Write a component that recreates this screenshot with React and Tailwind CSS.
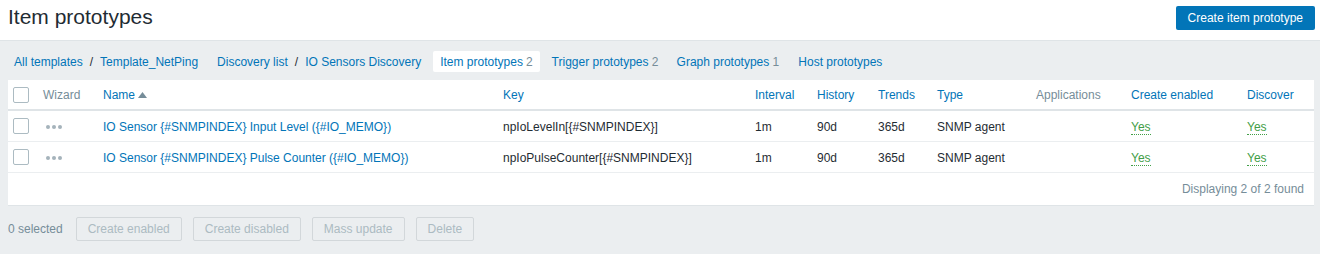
const cols = [
  { label: "", w: "w-[30px]" },
  { label: "Wizard", w: "w-[60px]", gray: true },
  { label: "Name", w: "w-[400px]", sort: true },
  { label: "Key", w: "w-[252px]" },
  { label: "Interval", w: "w-[62px]" },
  { label: "History", w: "w-[61px]" },
  { label: "Trends", w: "w-[59px]" },
  { label: "Type", w: "w-[99px]" },
  { label: "Applications", w: "w-[95px]", gray: true },
  { label: "Create enabled", w: "w-[116px]" },
  { label: "Discover", w: "w-[72px]" },
];

const rows = [
  {
    name: "IO Sensor {#SNMPINDEX} Input Level ({#IO_MEMO})",
    key: "npIoLevelIn[{#SNMPINDEX}]",
  },
  {
    name: "IO Sensor {#SNMPINDEX} Pulse Counter ({#IO_MEMO})",
    key: "npIoPulseCounter[{#SNMPINDEX}]",
  },
];

function Checkbox() {
  return (
    <span className="block h-[16px] w-[16px] rounded-[2px] border border-[#acbbc2] bg-white" />
  );
}

function Dots() {
  return (
    <span className="flex gap-[2px]">
      <span className="h-[4px] w-[4px] rounded-full bg-[#a5b3bb]" />
      <span className="h-[4px] w-[4px] rounded-full bg-[#a5b3bb]" />
      <span className="h-[4px] w-[4px] rounded-full bg-[#a5b3bb]" />
    </span>
  );
}

function Yes() {
  return (
    <span className="border-b border-dotted border-[#429e47] text-[#429e47]">Yes</span>
  );
}

export default function App() {
  return (
    <div
      className="min-h-[254px] bg-[#ebeef0] text-[12px] text-[#1f2c33]"
      style={{ fontFamily: '"Liberation Sans", Arial, sans-serif' }}
    >
      <div className="flex h-[41px] items-start justify-between border-b border-[#dfe4e7] bg-white px-[8px]">
        <h1 className="mt-[5px] text-[21px] leading-[24px] font-normal text-[#1f2c33]">
          Item prototypes
        </h1>
        <button className="mt-[6px] mr-[-3px] h-[24px] rounded-[2px] bg-[#0275b8] px-[12px] text-[12px] text-white">
          Create item prototype
        </button>
      </div>

      <div className="flex h-[39px] items-center px-[14px] pt-[2px] text-[#0275b8]">
        <span>All templates</span>
        <span className="mx-[7px] text-[#1f2c33]">/</span>
        <span>Template_NetPing</span>
        <span className="ml-[19px]">Discovery list</span>
        <span className="mx-[7px] text-[#1f2c33]">/</span>
        <span>IO Sensors Discovery</span>
        <span className="ml-[12px] flex h-[21px] items-center rounded-[2px] bg-white px-[7px]">
          Item prototypes <span className="ml-[3px] text-[#768d99]">2</span>
        </span>
        <span className="ml-[12px]">
          Trigger prototypes <span className="text-[#768d99]">2</span>
        </span>
        <span className="ml-[18px]">
          Graph prototypes <span className="text-[#768d99]">1</span>
        </span>
        <span className="ml-[19px]">Host prototypes</span>
      </div>

      <div className="mx-[8px] w-[1306px] border-b border-[#dfe4e7] bg-white">
        <table className="w-full table-fixed border-collapse">
          <thead>
            <tr className="h-[30px] border-b-2 border-[#dfe4e7]">
              {cols.map((c, i) => (
                <th
                  key={i}
                  className={`${c.w} px-[5px] text-left font-normal ${
                    c.gray ? "text-[#768d99]" : "text-[#0275b8]"
                  }`}
                >
                  {i === 0 ? (
                    <Checkbox />
                  ) : (
                    <span className="flex items-center">
                      {c.label}
                      {c.sort && (
                        <svg width="9" height="6" viewBox="0 0 9 6" className="ml-[3px]">
                          <path d="M0 6 L4.5 0 L9 6 Z" fill="#768d99" />
                        </svg>
                      )}
                    </span>
                  )}
                </th>
              ))}
            </tr>
          </thead>
          <tbody>
            {rows.map((r) => (
              <tr key={r.key} className="h-[31px] border-b border-[#ebeef0]">
                <td className="px-[5px]">
                  <Checkbox />
                </td>
                <td className="px-[5px] pt-[2px] pl-[8px]">
                  <Dots />
                </td>
                <td className="px-[5px] pt-[2px] text-[#0275b8]">{r.name}</td>
                <td className="px-[5px] pt-[2px]">{r.key}</td>
                <td className="px-[5px] pt-[2px]">1m</td>
                <td className="px-[5px] pt-[2px]">90d</td>
                <td className="px-[5px] pt-[2px]">365d</td>
                <td className="px-[5px] pt-[2px]">SNMP agent</td>
                <td className="px-[5px]"></td>
                <td className="px-[5px] pt-[2px]">
                  <Yes />
                </td>
                <td className="px-[5px] pt-[2px]">
                  <Yes />
                </td>
              </tr>
            ))}
          </tbody>
        </table>
        <div className="flex h-[32px] items-center justify-end pr-[10px] text-[#768d99]">
          Displaying 2 of 2 found
        </div>
      </div>

      <div className="mt-[11px] flex items-center px-[8px] pb-[14px]">
        <span className="mr-[13px] text-[#768d99]">0 selected</span>
        {["Create enabled", "Create disabled", "Mass update", "Delete"].map((b) => (
          <button
            key={b}
            className="mr-[11px] h-[24px] rounded-[2px] border border-[#d2d7da] bg-[#ebeef0] px-[11px] text-[12px] text-[#acbbc2]"
          >
            {b}
          </button>
        ))}
      </div>
    </div>
  );
}
